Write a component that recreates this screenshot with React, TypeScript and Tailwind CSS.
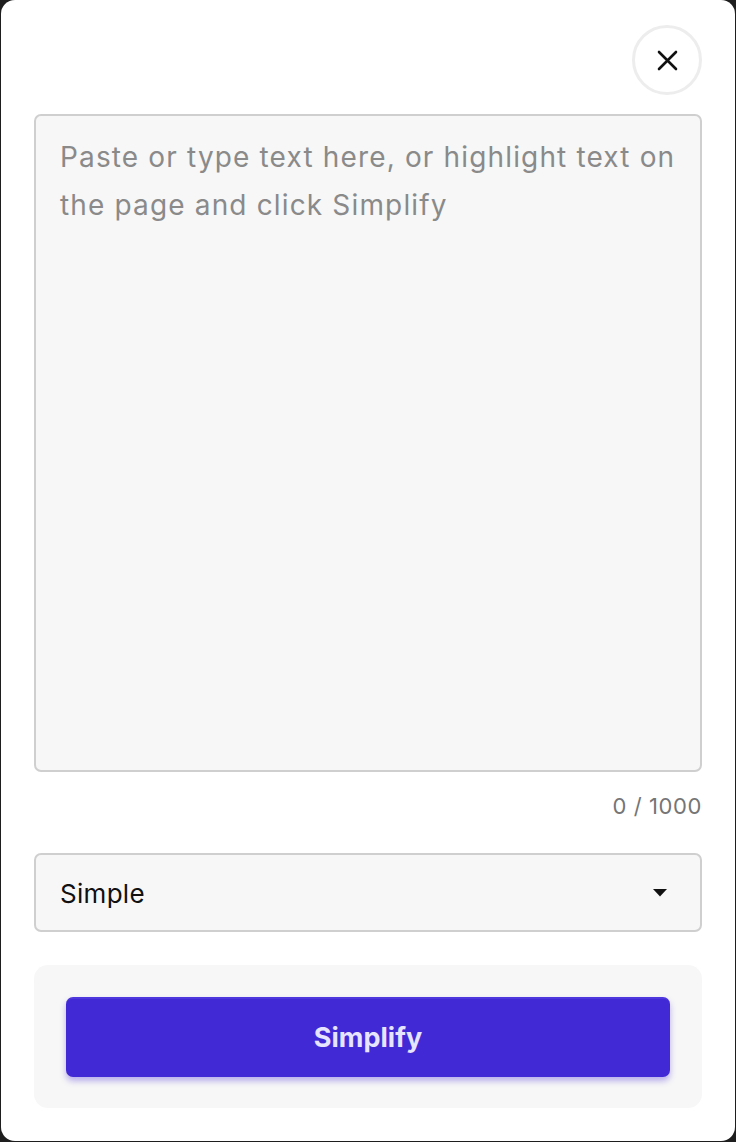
import React, { useState } from 'react';

const levels = ['Simple', 'Simpler', 'Simplest'];

const App: React.FC = () => {
    const [text, setText] = useState('');
    const [level, setLevel] = useState('Simple');

    return (
        <div className="w-[736px] h-[1142px] bg-[#1e1e1e] px-px pb-px" style={{ fontFamily: 'Inter, "Noto Sans", sans-serif' }}>
            <div className="h-full bg-white rounded-[14px] px-[33px] pt-[25px] flex flex-col">
                <div className="flex justify-end">
                    <button className="w-[70px] h-[70px] rounded-full border-[3px] border-[#ededed] flex items-center justify-center text-[#111]">
                        <svg width="21" height="21" viewBox="0 0 21 21" fill="none" stroke="currentColor" strokeWidth="2.6" strokeLinecap="round">
                            <path d="M2 2L19 19M19 2L2 19" />
                        </svg>
                    </button>
                </div>

                <textarea
                    value={text}
                    onChange={(e) => setText(e.target.value.slice(0, 1000))}
                    placeholder="Paste or type text here, or highlight text on the page and click Simplify"
                    className="mt-[19px] h-[658px] w-full resize-none bg-[#f7f7f7] border-2 border-[#cfcfcf] rounded-[7px] pl-[24px] pr-[14px] pt-[17px] text-[28px] leading-[48px] tracking-[1.15px] text-[#222] placeholder:text-[#8a8a8a] outline-none"
                />

                <div className="mt-[20px] text-right text-[22px] leading-[28px] tracking-[0.6px] text-[#757575]">
                    {text.length} / 1000
                </div>

                <div className="relative mt-[33px]">
                    <select
                        value={level}
                        onChange={(e) => setLevel(e.target.value)}
                        className="appearance-none w-full h-[79px] bg-[#f7f7f7] border-2 border-[#cfcfcf] rounded-[7px] pl-[24px] pt-px text-[26px] tracking-[0.3px] text-[#111] outline-none"
                    >
                        {levels.map(l => <option key={l} value={l}>{l}</option>)}
                    </select>
                    <svg className="absolute right-[35px] top-[36px] pointer-events-none" width="14" height="8" viewBox="0 0 14 8">
                        <path d="M0 0H14L7 7.5Z" fill="#111" />
                    </svg>
                </div>

                <div className="mt-[33px] bg-[#f7f7f7] rounded-[14px] px-[32px] pt-[32px] pb-[31px]">
                    <button className="w-full h-[80px] bg-[#4229d6] border-t-2 border-[#4e37dc] rounded-[7px] text-[#e6e4ff] text-[27px] font-bold shadow-[0_4px_6px_rgba(66,41,214,0.35)]">
                        Simplify
                    </button>
                </div>
            </div>
        </div>
    );
};

export default App;
